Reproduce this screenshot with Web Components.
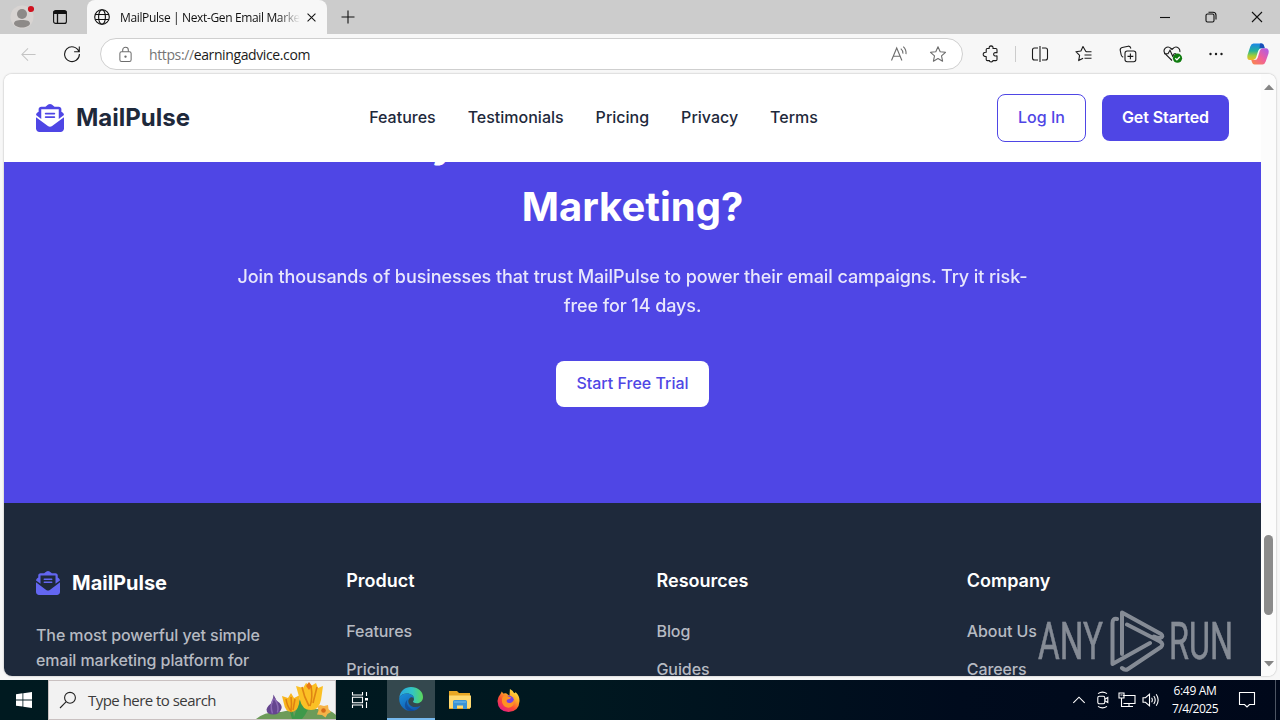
<!DOCTYPE html>
<html lang="en">

<head>
  <meta charset="UTF-8">
  <meta name="viewport" content="width=device-width, initial-scale=1.0">
  <title>MailPulse | Next-Gen Email Marketing</title>
  <style>
    html,
    body {
      margin: 0;
      height: 100%;
      overflow: hidden
    }
  </style>
</head>

<body>
  <script>
    const UI = `"Open Sans","Noto Sans",sans-serif`;
    const INTER = `Inter,"Liberation Sans",sans-serif`;

    // [viewBox, markup]; stroke icons use currentColor
    const ICONS = {
      mail: ["0 0 512 512", `<path fill="currentColor" stroke="none" d="M215.4 96H144 107.8 96v8.8V144v40.4 89L.2 202.5c1.6-18.1 10.9-34.9 25.7-45.8L48 140.3V96c0-26.5 21.5-48 48-48h76.6l49.9-36.9C232.2 3.9 243.9 0 256 0s23.8 3.9 33.5 11L339.4 48H416c26.5 0 48 21.5 48 48v44.3l22.1 16.4c14.8 10.9 24.1 27.7 25.7 45.8L416 273.4v-89V144 104.8 96H404.2 368 296.6 215.4zM0 448V242.1L217.6 403.3c11.1 8.2 24.6 12.7 38.4 12.7s27.3-4.4 38.4-12.7L512 242.1V448c0 35.3-28.7 64-64 64H64c-35.3 0-64-28.7-64-64zM176 160H336c8.8 0 16 7.2 16 16s-7.2 16-16 16H176c-8.8 0-16-7.2-16-16s7.2-16 16-16zm0 64H336c8.8 0 16 7.2 16 16s-7.2 16-16 16H176c-8.8 0-16-7.2-16-16s7.2-16 16-16z"/>`],
      profile: ["0 0 24 24", `<circle cx="12" cy="12" r="11.500" fill="#d8d4d2" stroke="none"/><circle cx="12" cy="9" r="5" fill="#8d8a88" stroke="none"/><path d="M4 18.500c0-2.500 3-3.500 8-3.500s8 1 8 3.500c0 2-4 4-8 4s-8-2-8-4z" fill="#8d8a88" stroke="none"/><circle cx="21" cy="4" r="3.100" fill="#d0121f" stroke="none"/>`],
      workspace: ["0 0 16 16", `<rect x="1.600" y="1.600" width="12.800" height="12.800" rx="2"/><path d="M1.600 3.500h12.800" stroke-width="3"/><path d="M5.500 4v10.400" stroke-width="1.300"/>`],
      globe: ["0 0 16 16", `<circle cx="8" cy="8" r="7.300"/><ellipse cx="8" cy="8" rx="3.400" ry="7.300"/><path d="M1.300 5.500h13.400M1.300 10.500h13.400"/>`],
      close: ["0 0 16 16", `<path d="M3.800 3.800l8.400 8.400M12.200 3.800l-8.400 8.400"/>`],
      plus: ["0 0 16 16", `<path d="M8 1.500v13M1.500 8h13"/>`],
      min: ["0 0 16 16", `<path d="M3 8.500h10"/>`],
      restore: ["0 0 16 16", `<rect x="3" y="5" width="8" height="8" rx="1.500"/><path d="M5.500 3.200h4.500q3 0 3 3v4.300"/>`],
      wclose: ["0 0 16 16", `<path d="M3 3l10 10M13 3L3 13"/>`],
      back: ["0 0 18 18", `<path d="M16.500 9H2M8.500 2.500L2 9l6.500 6.500"/>`],
      reload: ["0 0 18 18", `<path d="M15.900 6.500A7.400 7.400 0 1 0 16.400 9M16.300 1.500v5.200h-5.200"/>`],
      lock: ["0 0 16 18", `<rect x="2" y="6" width="12" height="10.500" rx="1.800"/><path d="M5 6V4.200a3 3 0 0 1 6 0V6"/><circle cx="8" cy="11.200" r=".7" fill="currentColor"/>`],
      read: ["0 0 18 18", `<path d="M1.500 15.500L6.700 3l5.200 12.500M3.300 11.300h6.800"/><path d="M10.800 3.600q2.400 2 2.100 5M13.300 1.600q3.200 3 2.700 7.500"/>`],
      star: ["0 0 18 18", `<path d="M9 1.800l2.200 4.900 5.300.6-4 3.600 1.100 5.300L9 13.500l-4.600 2.700 1.100-5.300-4-3.600 5.300-.6z" stroke-linejoin="round"/>`],
      puzzle: ["0 0 18 18", `<path d="M5.200 3.500h2q-.4-2.500 1.900-2.600 2.300.1 1.900 2.600h2.800q1.200 0 1.200 1.200v3q-3.300-.5-3.400 1.600.1 2.100 3.400 1.600v3.500q0 1.200-1.200 1.200h-3q.2 1.300-1.600 1.300-1.900 0-1.700-1.300H5.400q-1.200 0-1.200-1.200v-2.900q-2.900.2-3-2.100.1-2.300 3-2.100V4.700q0-1.200 1-1.200z" stroke-linejoin="round"/>`],
      split: ["0 0 18 18", `<path d="M7 3H3.500Q1.500 3 1.500 5v8q0 2 2 2H7M11 3h3.500q2 0 2 2v8q0 2-2 2H11M9 1v16"/>`],
      favs: ["0 0 18 18", `<path d="M16.500 6.700h-5l-.8-.5L8 1.500 5.900 6 .9 6.700l3.700 3.600-.9 5.300 4.400-2.300M9.500 10h7M9.500 13.300h7" stroke-linejoin="round"/>`],
      collect: ["0 0 18 18", `<rect x="6" y="6" width="10.800" height="10.800" rx="2.200"/><path d="M11.400 8.500v5.800M8.500 11.400h5.800M4.200 12.200Q2.500 11.500 2.200 10L1.200 5.200Q1 3 3.200 2.500l6-1.300q2-.3 2.700 2.300"/>`],
      health: ["0 0 20 18", `<path d="M9 15.500L2.300 8.800q-2.600-3 0-5.600 3-2.500 5.700.3l1 1 1-1q2.700-2.800 5.600-.3 1.700 1.800 1.200 3.800M1 8.700h4l2-3.500 2.700 6 1.500-2.500h2"/><circle cx="14.500" cy="13.200" r="4.600" fill="#107c10" stroke="none"/><path d="M12.300 13.300l1.600 1.600 2.900-3.100" stroke="#fff" stroke-width="1.300"/>`],
      dots: ["0 0 18 18", `<g fill="currentColor" stroke="none"><circle cx="3.500" cy="9" r="1.200"/><circle cx="9" cy="9" r="1.200"/><circle cx="14.500" cy="9" r="1.200"/></g>`],
      copilot: ["0 0 24 24", `<defs><linearGradient id="a" x1="0" y1="0" x2="0" y2="1"><stop offset="0" stop-color="#1c86e8"/><stop offset=".45" stop-color="#25b29a"/><stop offset=".75" stop-color="#a5cf36"/><stop offset="1" stop-color="#f2b92c"/></linearGradient><linearGradient id="b" x1="1" y1="0" x2="0" y2="1"><stop offset="0" stop-color="#a65df0"/><stop offset=".5" stop-color="#f0609b"/><stop offset="1" stop-color="#fb8a43"/></linearGradient></defs><g stroke="none"><path d="M7.500 1.500h8q1.800 0 2.500 2.200l.7 2.600h-3.500q-2.200 0-3 2.500l-2 6.500q-.8 2.700-3 2.700H3.800Q.5 18 1.500 13L4.300 4.500Q5.300 1.500 7.500 1.500z" fill="url(#a)"/><path d="M14 1.500h2q1.500.5 2 2.200l.7 2.600h-3l-2.200-.2z" fill="#184fb8"/><path d="M16.500 22.500h-8q-1.800 0-2.500-2.200L5.300 18h3.500q2.200 0 3-2.500l2-6.700q.8-2.500 3-2.500h3.400q3.300.7 2.300 5.200l-2.800 8q-1 3-3.200 3z" fill="url(#b)"/></g>`],
      win: ["0 0 16 16", `<path fill="#fff" stroke="none" d="M0 2.200l6.500-.9v6.200H0zM7.300 1.200L16 0v7.500H7.300zM0 8.400h6.500v6.200L0 13.700zM7.300 8.400H16V16l-8.700-1.200z"/>`],
      search: ["0 0 18 18", `<circle cx="11" cy="6.800" r="5.400"/><path d="M7 10.800L1 17"/>`],
      tasks: ["0 0 18 18", `<path d="M1.500 1v3h10V1M1.500 17v-3h10v3M1.500 6.300h10v5.400h-10zM15.500 1v4M15.500 11v6"/><path d="M14 7h3v2.500h-3z" fill="#fff" stroke="none"/>`],
      edge: ["0 0 24 24", `<defs><linearGradient id="a" x1="0" y1=".3" x2="1" y2=".3"><stop offset="0" stop-color="#28a6e3"/><stop offset=".55" stop-color="#32c5c4"/><stop offset="1" stop-color="#5bd859"/></linearGradient><linearGradient id="b" x1="0" y1="0" x2=".7" y2="1"><stop offset="0" stop-color="#1a91db"/><stop offset="1" stop-color="#1157ad"/></linearGradient></defs><g stroke="none"><path d="M.3 10.500C1.200 4 6 0 12 0c7 0 12 4.500 12 10 0 4-3 6.300-6.300 6.300-2.700 0-3.900-1-3.700-1.700.2-.6 1-1 1-2.900 0-2.900-3-5.200-7-5.200-3.500 0-6 1.500-7.700 4z" fill="url(#a)"/><path d="M.3 10.500C1.900 7.800 4.800 6.500 8 6.500c4 0 7 2.300 7 5.200-.5-1-2-1.700-3-1.500-2.500 1-3.500 4-2 6.800 2 3.300 7 4.100 11.700 1.700C19.500 22 16 24 12 24 5 24-.5 18 .3 10.500z" fill="url(#b)"/><path d="M8.600 12.500c-2.300 5 2 9.500 7 10.900-9 2.600-12.600-5.600-7-10.900z" fill="#123f88" opacity=".6"/></g>`],
      folder: ["0 0 22 20", `<g stroke="none"><path d="M0 1h8l2 2h11v16H0z" fill="#e8a724"/><path d="M0 5.500h22v11.500q0 1-1 1H1q-1 0-1-1z" fill="#ffd970"/><path d="M4 19v-7.500q0-1.500 1.500-1.500h11q1.500 0 1.500 1.500V19h-4v-3.500H8V19z" fill="#3b93d5"/><path d="M5 12h12" stroke="#75bdec" stroke-width="1"/></g>`],
      firefox: ["0 0 24 24", `<defs><linearGradient id="a" x1=".9" y1="0" x2=".2" y2="1"><stop offset="0" stop-color="#fff052"/><stop offset=".35" stop-color="#ffab26"/><stop offset=".65" stop-color="#fb4a35"/><stop offset="1" stop-color="#e3178c"/></linearGradient></defs><g stroke="none"><path d="M3.500 5.500L5 2.500l1.500 2.300Q8 4.300 9.500 4.500L13 7l.5-7q3 1.500 4.500 4.500l1.500-1.200Q23.700 7 23.500 12.500 23 23.500 12 24 1 23.500.5 12.500.6 8.500 3.500 5.500z" fill="url(#a)"/><circle cx="12.300" cy="12.500" r="5.600" fill="#7542e5"/><path d="M6 8q3-2 6.500.2l2.200.3q-.4 2-3.200 2.300-1.600.5-1.500 2 1 2.400 4 1.800 2.800-.9 3.300-3.500 1.800 5.500-3 8-6.500 1.700-8.800-4.500Q4.500 11 6 8z" fill="#ff9123"/></g>`],
      up: ["0 0 14 14", `<path d="M1.300 9.800L7 4.200l5.700 5.600"/>`],
      camera: ["0 0 16 18", `<rect x="2.800" y="5.300" width="7" height="7.400" rx="1.500"/><path d="M9.800 8.200l3-1.700v5l-3-1.700M3 2.600Q7.500-.3 12 2.600M3 15.400q4.500 2.900 9 0"/>`],
      network: ["0 0 18 16", `<path d="M5 3.500h12v8H5.500M11 11.500v3M7 14.500h8M3.500 6v8.500H7M1 1h5v5H1zM2.500 3h2"/>`],
      sound: ["0 0 18 16", `<path d="M1 5.700h2.500l4-3.500v11.600l-4-3.500H1zM9.600 5.700q1.500 2.300 0 4.600M11.800 4q2.800 4 0 8M14.200 2.300q3.900 5.700 0 11.400"/>`],
      notify: ["0 0 18 18", `<path d="M1.500 1.500h15v12h-5L9 16l-2.500-2.500h-5z"/>`],
      flowers: ["0 0 80 38", `<g stroke="none"><path d="M0 38q9-8 25-7 20-5 35-3 14-1 20 6v4z" fill="#6d9b59"/><path d="M36 38l-3-11 3-1 2 10 6-19 4 1 2 9 8-9-9 16-3 4z" fill="#3e994a"/><g transform="translate(2.500 .5)"><path d="M15 13l3 6q6 4 5 8-2 6-8 6-7 0-7-5 1-4 6-7z" fill="#65458f"/><path d="M15 17q-4 7-1 15M16 17q5 8 3 14" fill="none" stroke="#8968b1" stroke-width="1.500"/></g><g transform="translate(2 1)"><path d="M24 14l6 2 3-5 3 5 6-3-1 9q-2 8-8 8-6-1-7-8z" fill="#f8b51d"/><path d="M28 17q1 7 5 12 1-7 0-14M37 17l-2 11" stroke="#df8113" fill="none" stroke-width="1.500"/></g><path d="M40 5l7 2 3-5 5 3 5-3 2 5 5-2-2 14q-2 10-10 10-9 0-11-10z" fill="#fbc025"/><path d="M46 6q2 10 7 19M55 5q2 12-1 20M61 6l-4 16" stroke="#df8513" fill="none" stroke-width="1.600"/><path d="M50 5l3-4 3 4-3 4z" fill="#e97715"/><path d="M64 24l4 1 4-1 .5 4 2.500 3-3.500 2-2 3.500-3.500-2.500-5-.5 1.500-4-1-4z" fill="#f6b348"/><circle cx="67.500" cy="29.500" r="2.300" fill="#d66b19"/></g>`],
      tri: ["0 0 10 6", `<path d="M0 6l5-5.500L10 6z" fill="#858585" stroke="none"/>`]
    };

    const define = (name, html, init) => customElements.define(name, class extends HTMLElement {
      constructor() {
        super().attachShadow({ mode: "open" })
      }
      connectedCallback() {
        this.shadowRoot.innerHTML = typeof html === "function" ? html(this) : html;
        init && init(this);
      }
    });

    define("ui-icon", (el) => {
      const [box, body] = ICONS[el.getAttribute("name")];
      const w = el.getAttribute("w") || 18;
      const h = el.getAttribute("h") || w;
      return `<style>` +
        `:host{display:block;flex:none;width:${w}px;height:${h}px}` +
        `svg{display:block;fill:none;stroke:currentColor;stroke-width:1.1}` +
        `</style><svg width="${w}" height="${h}" viewBox="${box}">${body}</svg>`;
    });

    // text set to a given width by spreading the letter spacing
    define("fit-text", `<style>:host{display:inline-block;white-space:pre}</style><slot></slot>`, (el) => {
      const chars = el.textContent.length;
      el.style.letterSpacing = (el.getAttribute("w") - el.getBoundingClientRect().width) / chars + "px";
    });

    define("tab-strip",
      `<style>` +
      `:host{display:flex;height:34px;background:#ccc;color:#111;font:12px ${UI}}` +
      `.c{display:grid;place-items:center}` +
      `.tab{display:flex;align-items:center;box-sizing:border-box;width:240px;padding:0 8px 0 7px;background:#f7f7f7;border-radius:8px 8px 0 0}` +
      `.title{flex:1;margin-left:10px;overflow:hidden;-webkit-mask:linear-gradient(90deg,#000 158px,transparent 180px)}` +
      `.fill{flex:1}` +
      `</style>` +
      `<div class="c" style="width:44px"><ui-icon name="profile" w="24"></ui-icon></div>` +
      `<div class="c" style="width:32px;margin-right:11px"><ui-icon name="workspace" w="16"></ui-icon></div>` +
      `<div class="tab"><ui-icon name="globe" w="16"></ui-icon>` +
      `<div class="title"><fit-text w="180">MailPulse | Next-Gen Email Marke</fit-text></div>` +
      `<ui-icon name="close" w="15"></ui-icon></div>` +
      `<div class="c" style="width:42px"><ui-icon name="plus" w="16"></ui-icon></div>` +
      `<div class="fill"></div>` +
      ["min", "restore", "wclose"].map(n => `<div class="c" style="width:46px"><ui-icon name="${n}" w="16"></ui-icon></div>`).join("")
    );

    define("address-bar",
      `<style>` +
      `:host{display:flex;align-items:center;height:40px;background:#f7f7f7;color:#1b1b1b}` +
      `.c{display:grid;place-items:center;width:44px}` +
      `.url{display:flex;align-items:center;box-sizing:border-box;width:863px;height:32px;padding:0 15px 0 17px;border:1px solid #cfcfcf;border-radius:16px;background:#fff;font:14px ${UI};margin-right:6px}` +
      `.url fit-text{margin-left:16px;margin-right:auto}` +
      `.url ui-icon{color:#6d6d6d}` +
      `span{color:#757575}` +
      `i{width:1px;height:16px;background:#ccc;margin:0 2px}` +
      `</style>` +
      `<div class="c" style="width:56px;color:#c4c4c4"><ui-icon name="back" w="17"></ui-icon></div>` +
      `<div class="c" style="width:32px;margin-right:12px"><ui-icon name="reload" w="18"></ui-icon></div>` +
      `<div class="url"><ui-icon name="lock" w="15" h="17"></ui-icon>` +
      `<fit-text w="161"><span>https://</span>earningadvice.com</fit-text>` +
      `<ui-icon name="read" style="margin-right:21px"></ui-icon><ui-icon name="star"></ui-icon></div>` +
      `<div class="c"><ui-icon name="puzzle"></ui-icon></div><i></i>` +
      ["split", "favs", "collect"].map(n => `<div class="c"><ui-icon name="${n}"></ui-icon></div>`).join("") +
      `<div class="c"><ui-icon name="health" w="20" h="18" style="margin-left:2px"></ui-icon></div>` +
      `<div class="c"><ui-icon name="dots"></ui-icon></div>` +
      `<div class="c" style="width:40px"><ui-icon name="copilot" w="24"></ui-icon></div>`
    );

    define("brand-logo", (el) =>
      `<style>` +
      `:host{display:flex;align-items:center;gap:12px;font-weight:700;line-height:1.6}` +
      `ui-icon{color:var(--mark,#4f46e5)}` +
      `</style><ui-icon name="mail" w="${el.getAttribute("mark")}"></ui-icon><slot></slot>`
    );

    define("pulse-button",
      `<style>` +
      `:host{display:inline-block;padding:10px 20px;border-radius:8px;background:#4f46e5;color:#fff;font:600 16px/25.6px ${INTER};letter-spacing:-.09px}` +
      `:host([outline]){background:#fff;border:1px solid #4f46e5;color:#4f46e5;font-weight:500;letter-spacing:0}` +
      `:host([light]){background:#fff;color:#4f46e5;font-weight:500;letter-spacing:0}` +
      `</style><slot></slot>`
    );

    define("site-header",
      `<style>` +
      `:host{display:flex;align-items:center;justify-content:space-between;box-sizing:border-box;height:88px;padding:0 32px;background:#fff;color:#1e293b}` +
      `brand-logo{font-size:24px}` +
      `nav,div{display:flex;align-items:center}` +
      `nav{gap:32px;font-weight:500}` +
      `div{gap:16px}` +
      `</style>` +
      `<brand-logo mark="28">MailPulse</brand-logo>` +
      `<nav><a>Features</a><a>Testimonials</a><a>Pricing</a><a>Privacy</a><a>Terms</a></nav>` +
      `<div><pulse-button outline>Log In</pulse-button><pulse-button>Get Started</pulse-button></div>`
    );

    // the first heading line is scrolled away under the header
    define("site-cta",
      `<style>` +
      `:host{display:flex;flex-direction:column;align-items:center;height:341px;overflow:hidden;background:#4f46e5;color:#fff;text-align:center}` +
      `h2{margin:-50.6px 0 24px;width:800px;font-size:40px;line-height:64px;font-weight:700}` +
      `p{margin:0 0 40px;width:800px;font-size:18px;line-height:28.8px;font-weight:500;letter-spacing:-.087px;opacity:.87}` +
      `</style>` +
      `<h2>Ready to Transform Your Email<br>Marketing?</h2>` +
      `<p>Join thousands of businesses that trust MailPulse to power their email campaigns. Try it risk-<br>free for 14 days.</p>` +
      `<pulse-button light>Start Free Trial</pulse-button>`
    );

    define("footer-column",
      `<style>` +
      `:host{display:block}` +
      `h3{margin:0 0 23px;font-size:18px;line-height:28.8px;font-weight:600;color:#fff}` +
      `div{display:flex;flex-direction:column;gap:12.6px;line-height:25.6px;letter-spacing:-.09px}` +
      `</style><h3><slot name="title"></slot></h3><div><slot></slot></div>`
    );

    define("site-footer",
      `<style>` +
      `:host{display:grid;grid-template-columns:repeat(4,1fr);gap:48px;box-sizing:border-box;height:173px;padding:64px 32px 0;overflow:hidden;background:#1e293b;color:#b6bac2;font-weight:500}` +
      `brand-logo{--mark:#6366f1;font-size:20px;color:#fff}` +
      `p{margin:24px 0 0;line-height:25.2px;letter-spacing:-.09px}` +
      `</style>` +
      `<section><brand-logo mark="24">MailPulse</brand-logo>` +
      `<p>The most powerful yet simple<br>email marketing platform for</p></section>` +
      `<footer-column><span slot="title">Product</span><a>Features</a><a>Pricing</a></footer-column>` +
      `<footer-column><span slot="title">Resources</span><a>Blog</a><a>Guides</a></footer-column>` +
      `<footer-column><span slot="title">Company</span><a>About Us</a><a>Careers</a></footer-column>`
    );

    define("scroll-bar",
      `<style>` +
      `:host{display:flex;flex-direction:column;align-items:center;box-sizing:border-box;width:15px;padding:10px 0 9px;background:#fcfcfc}` +
      `div{width:9px;height:80px;margin-top:445px;margin-bottom:auto;border-radius:5px;background:#8b8b8b}` +
      `.down{transform:rotate(180deg)}` +
      `</style>` +
      `<ui-icon name="tri" w="10" h="6"></ui-icon><div></div><ui-icon class="down" name="tri" w="10" h="6"></ui-icon>`
    );

    define("page-frame",
      `<style>` +
      `:host{display:block;padding:0 4px 4px;background:#f7f7f7}` +
      `.page{display:flex;height:602px;border-radius:8px;overflow:hidden;background:#fff;box-shadow:0 0 2px #0005}` +
      `main{flex:1;overflow:hidden;font:16px/25.6px ${INTER}}` +
      `</style><div class="page"><main><slot></slot></main><scroll-bar></scroll-bar></div>`
    );

    define("task-bar",
      `<style>` +
      `:host{display:flex;height:40px;background:linear-gradient(90deg,#001a20,#001820 45%,#000b1d 75%,#00081a);color:#fff;font:12px ${UI}}` +
      `.c{display:grid;place-items:center;width:48px}` +
      `.search{display:flex;align-items:center;box-sizing:border-box;width:288px;padding-left:10px;background:#f2f2f2;border:1px solid #c9c1c1;color:#3b3b3b;font-size:15px}` +
      `.search fit-text{margin-left:11px}` +
      `.search .art{margin:0 -1px 0 auto;align-self:flex-end}` +
      `.active{margin-left:3px;box-sizing:border-box;background:#34484e;border-bottom:2px solid #76b9ed}` +
      `.tray{display:flex;align-items:center;margin-left:auto}` +
      `.clock{display:flex;flex-direction:column;align-items:center;width:56px;margin-left:4px;line-height:18px}` +
      `i{width:1px;height:40px;background:#4d5563;margin-left:4px;margin-right:4px}` +
      `</style>` +
      `<div class="c"><ui-icon name="win" w="16"></ui-icon></div>` +
      `<div class="search"><ui-icon name="search" w="18" style="color:#222"></ui-icon>` +
      `<fit-text w="128">Type here to search</fit-text><ui-icon class="art" name="flowers" w="80" h="38"></ui-icon></div>` +
      `<div class="c"><ui-icon name="tasks" w="18"></ui-icon></div>` +
      `<div class="c active"><ui-icon name="edge" w="24"></ui-icon></div>` +
      `<div class="c" style="margin-left:1px"><ui-icon name="folder" w="22" h="20"></ui-icon></div>` +
      `<div class="c"><ui-icon name="firefox" w="23"></ui-icon></div>` +
      `<div class="tray">` +
      `<div class="c" style="width:24px"><ui-icon name="up" w="14"></ui-icon></div>` +
      `<div class="c" style="width:24px"><ui-icon name="camera" w="16" h="18"></ui-icon></div>` +
      `<div class="c" style="width:24px"><ui-icon name="network" w="18" h="16"></ui-icon></div>` +
      `<div class="c" style="width:24px"><ui-icon name="sound" w="18" h="16"></ui-icon></div>` +
      `<div class="clock"><fit-text w="43">6:49 AM</fit-text><fit-text w="46">7/4/2025</fit-text></div>` +
      `<div class="c"><ui-icon name="notify" w="18"></ui-icon></div><i></i></div>`
    );

    define("any-run-mark",
      `<style>` +
      `:host{position:absolute;left:1036px;top:606px;z-index:2;opacity:.46}` +
      `svg{display:block}` +
      `text{font:52px Roboto,sans-serif;fill:#fff;stroke:#fff;stroke-width:.5}` +
      `path{fill:none;stroke:#fff;stroke-width:4;stroke-linejoin:round;stroke-linecap:round}` +
      `</style>` +
      `<svg width="200" height="70">` +
      `<text x="2" y="53" textLength="65" lengthAdjust="spacingAndGlyphs">ANY</text>` +
      `<text x="133" y="53" textLength="64" lengthAdjust="spacingAndGlyphs">RUN</text>` +
      `<path d="M86 48V6.500L125 28Q128 31 124 32Q121 32 118 30.500M81 13Q76.500 12 76.500 17V58L114 37M86 62q3 3 6 1L125 41Q128 38 124 35.500L91 18.500"/>` +
      `</svg>`
    );

    define("desktop-screen",
      `<style>:host{display:block;width:1280px;height:720px;overflow:hidden}</style>` +
      `<tab-strip></tab-strip><address-bar></address-bar>` +
      `<page-frame><site-header></site-header><site-cta></site-cta><site-footer></site-footer></page-frame>` +
      `<task-bar></task-bar><any-run-mark></any-run-mark>`
    );
  </script>

  <desktop-screen></desktop-screen>

</body>

</html>
